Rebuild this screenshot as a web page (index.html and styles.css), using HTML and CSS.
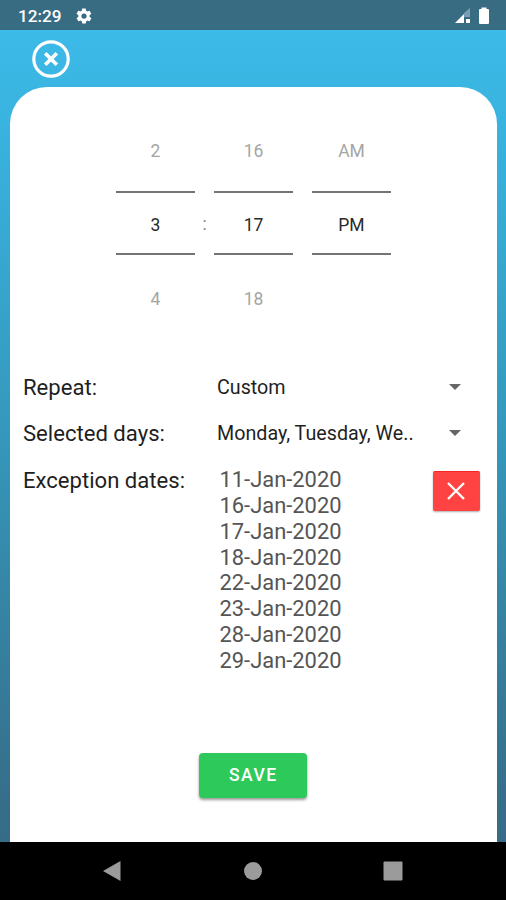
FILE: index.html
```html
<!DOCTYPE html>
<html lang="en">
<head>
<meta charset="utf-8">
<title>Alarm</title>
<link rel="stylesheet" href="styles.css">
</head>
<body>
<div class="screen">
  <header class="status">
    <span class="clock">12:29</span>
    <svg class="gear" viewBox="0 0 24 24"><path d="M19.4 13c0-.3.1-.6.1-1s0-.7-.1-1l2.100-1.600c.2-.2.200-.4.100-.6l-2-3.500c-.1-.2-.4-.3-.6-.2l-2.500 1c-.5-.4-1.100-.7-1.700-1l-.4-2.600c0-.3-.2-.5-.5-.5h-4c-.3 0-.5.2-.5.400l-.4 2.700c-.6.2-1.100.6-1.700 1l-2.500-1c-.2-.1-.5 0-.6.200l-2 3.500c-.1.2-.1.400.100.600L4.500 11c0 .3-.1.600-.1 1s0 .7.100 1l-2.100 1.600c-.2.200-.2.400-.1.600l2 3.500c.1.200.4.300.6.200l2.500-1c.5.400 1.100.700 1.700 1l.4 2.600c0 .3.200.5.500.5h4c.3 0 .5-.2.500-.4l.4-2.700c.6-.2 1.100-.6 1.700-1l2.500 1c.2.100.5 0 .6-.2l2-3.500c.1-.2.100-.4-.1-.6zM12 15.500a3.500 3.500 0 1 1 0-7 3.500 3.500 0 0 1 0 7z"/></svg>
    <svg class="signal" viewBox="0 0 16 16"><path class="dim" d="M15 0v9H9v-4z"/><path d="M0 15 9 6v9z"/><path d="M11 11h4v4h-4z"/></svg>
    <svg class="battery" viewBox="0 0 12 18"><path d="M3.500 2V.5h5V2H10q1 0 1 1v13q0 1-1 1H2q-1 0-1-1V3q0-1 1-1z"/></svg>
  </header>
  <main class="app">
    <svg class="close" viewBox="0 0 38 38"><circle cx="19" cy="19" r="17.200"/><path d="m13.200 13.200 11.600 11.600m0-11.600-11.600 11.600"/></svg>
    <section class="card">
      <div class="picker">
        <div class="wheel"><span>2</span><b>3</b><span>4</span></div>
        <i class="colon">:</i>
        <div class="wheel"><span>16</span><b>17</b><span>18</span></div>
        <i class="colon"></i>
        <div class="wheel"><span>AM</span><b>PM</b><span></span></div>
      </div>
      <div class="row">
        <span class="label">Repeat:</span><span class="value">Custom</span>
        <svg class="caret" viewBox="0 0 12 6"><path d="M0 0h12L6 6z"/></svg>
      </div>
      <div class="row">
        <span class="label">Selected days:</span><span class="value">Monday, Tuesday, We..</span>
        <svg class="caret" viewBox="0 0 12 6"><path d="M0 0h12L6 6z"/></svg>
      </div>
      <div class="row exceptions">
        <span class="label">Exception dates:</span>
        <ul class="dates"><li>11-Jan-2020</li><li>16-Jan-2020</li><li>17-Jan-2020</li><li>18-Jan-2020</li><li>22-Jan-2020</li><li>23-Jan-2020</li><li>28-Jan-2020</li><li>29-Jan-2020</li></ul>
        <button class="clear"><svg viewBox="0 0 18 18"><path d="m1 1 16 16M17 1 1 17"/></svg></button>
      </div>
      <button class="save">SAVE</button>
    </section>
  </main>
  <nav class="nav">
    <svg viewBox="0 0 20 22"><path d="M1 11 18.500 1v20z"/></svg>
    <svg viewBox="0 0 20 22"><circle cx="10" cy="11" r="9"/></svg>
    <svg viewBox="0 0 20 22"><rect x=".5" y="1.500" width="19" height="19" rx="1"/></svg>
  </nav>
</div>
</body>
</html>
```
FILE: styles.css
```css
* { box-sizing: border-box; }
body { margin: 0; font-family: Roboto, sans-serif; }
.screen { width: 506px; height: 900px; display: flex; flex-direction: column; overflow: hidden; }
.status { height: 30px; flex: none; display: flex; align-items: center; padding: 1px 16px 0 18px; background: #376c82; color: #fff; }
.status svg { fill: #fff; }
.clock { font-size: 17.2px; font-weight: 500; width: 57px; line-height: 30px; }
.gear { width: 18px; height: 18px; }
.signal { width: 16px; height: 16px; margin-left: auto; margin-right: 7px; }
.signal .dim { fill: #7d9db5; }
.battery { width: 12px; height: 18px; }
.app { height: 812px; flex: none; display: flex; flex-direction: column; padding: 9.500px 9.500px 0 10px; background: linear-gradient(#3cbae8, #38b0dc 16%, #3596b9 52%, #366f8b 94%, #366c87); }
.close { width: 38px; height: 38px; flex: none; margin-left: 22px; fill: none; stroke: #fff; stroke-width: 3.200; }
.close path { stroke-width: 3.700; }
.card { flex: 1; margin-top: 9px; background: #fff; border-radius: 37px 37px 0 0; display: flex; flex-direction: column; align-items: center; }
.picker { display: flex; align-self: flex-start; margin-left: 106px; padding-top: 22.500px; height: 277px; font-size: 17.500px; }
.wheel { width: 79px; text-align: center; color: #a5a5a5; }
.wheel span { display: block; height: 82px; line-height: 85px; }
.wheel b { display: block; height: 63.500px; line-height: 65px; border-top: 2px solid #747474; border-bottom: 2px solid #747474; color: #2a2a2a; font-weight: 400; }
.wheel b + span { line-height: 88px; }
.colon { width: 19px; text-align: center; font-style: normal; color: #8b8b8b; line-height: 231px; }
.row { width: 100%; height: 46.500px; display: flex; align-items: center; padding: 0 17px 0 13px; color: #1f1f1f; }
.label { width: 194px; flex: none; font-size: 22.100px; line-height: 26px; }
.value { width: 232px; font-size: 19.700px; line-height: 26px; padding-top: 2px; }
.caret { width: 12px; height: 6px; fill: #666; }
.exceptions { height: 206px; align-items: flex-start; margin-top: 10px; }
.dates { list-style: none; margin: 0; padding: .8px 0 0 2.500px; width: 216px; color: #555; font-size: 21.900px; line-height: 25.800px; }
button { border: 0; padding: 0; font-family: inherit; }
.clear { width: 47px; height: 40px; margin-top: 4px; background: #ff4343; border-top: 1px solid #f52525; border-radius: 2px; display: flex; align-items: center; justify-content: center; box-shadow: 0 1px 2px #0005; }
.clear svg { width: 18px; height: 18px; fill: none; stroke: #fff; stroke-width: 2.300; }
.save { width: 108px; height: 45px; margin-top: 80px; border-radius: 4px; background: #2dca5b; color: #fff; font-size: 17.500px; font-weight: 500; letter-spacing: 1.500px; box-shadow: 0 2px 3px #0006; }
.nav { height: 58px; flex: none; display: flex; justify-content: space-between; padding: 18px 103px 0 102px; background: #000; }
.nav svg { width: 20px; height: 22px; fill: #9b9b9b; }
```
